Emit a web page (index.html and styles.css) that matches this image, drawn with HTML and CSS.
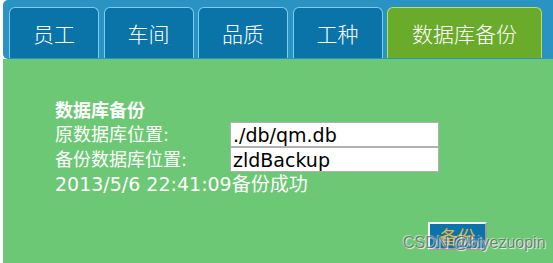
FILE: index.html
```html
<!DOCTYPE html>
<html lang="zh">
<head>
<meta charset="utf-8">
<title>数据库备份</title>
<link rel="stylesheet" href="styles.css">
</head>
<body>
<div class="header">
  <div class="tab">员工</div>
  <div class="tab">车间</div>
  <div class="tab">品质</div>
  <div class="tab">工种</div>
  <div class="tab tab-active">数据库备份</div>
</div>
<div class="panel">
  <div class="title">数据库备份</div>
  <div class="form">
    <span class="label">原数据库位置:</span>
    <input class="field" type="text" value="./db/qm.db">
    <span class="label">备份数据库位置:</span>
    <input class="field" type="text" value="zldBackup">
  </div>
  <div class="status">2013/5/6 22:41:09备份成功</div>
  <div class="actions"><button class="btn">备份</button></div>
  <div class="watermark">CSDN @biyezuopin</div>
</div>
</body>
</html>
```

FILE: styles.css
```css
html, body {
  margin: 0;
  padding: 0;
  height: 100%;
  background: #ffffff;
  overflow: hidden;
}
body {
  font-family: "DejaVu Sans", "Noto Sans CJK SC", sans-serif;
  display: flex;
  flex-direction: column;
}
.header {
  margin-left: 3px;
  height: 59px;
  flex: none;
  box-sizing: border-box;
  background: #2b93c4;
  border-radius: 5px 0 0 5px;
  display: flex;
  align-items: flex-end;
  gap: 4.5px;
  padding: 0 0 1px 6px;
}
.tab {
  box-sizing: border-box;
  width: 90px;
  height: 51px;
  border: 1px solid #7ccdf0;
  border-bottom: none;
  border-radius: 6px 6px 0 0;
  background: #0a74a9;
  color: #ffffff;
  font-family: "Noto Sans CJK SC", sans-serif;
  font-weight: 300;
  font-size: 21px;
  display: flex;
  align-items: center;
  justify-content: center;
}
.tab-active {
  width: 155px;
  background: #6aab2b;
  border-color: #b7e05e;
}
.panel {
  position: relative;
  flex: 1;
  margin-left: 3px;
  background: #6cc874;
  padding: 41px 0 0 52px;
  color: #ffffff;
  font-size: 18px;
}
.title {
  font-weight: bold;
  font-size: 18px;
  line-height: 22px;
  height: 22px;
}
.form {
  display: grid;
  grid-template-columns: 175px 209px;
  grid-auto-rows: 25px;
  align-items: center;
}
.label {
  line-height: 25px;
}
.field {
  box-sizing: border-box;
  width: 209px;
  height: 25px;
  margin: 0;
  border: 1px solid #b0b0b0;
  padding: 0 2px;
  font-family: "DejaVu Sans", sans-serif;
  font-size: 19px;
  color: #000000;
  background: #ffffff;
  outline: none;
}
.status {
  line-height: 25px;
  font-size: 19px;
}
.actions {
  margin-top: 25px;
  padding-left: 373px;
}
.btn {
  box-sizing: border-box;
  width: 59px;
  height: 28px;
  margin: 0;
  padding: 0;
  background: #0a74a9;
  border-style: solid;
  border-width: 2px;
  border-color: #f2f2f2 #9a9a9a #9a9a9a #f2f2f2;
  color: #e2b445;
  font-family: "Noto Sans CJK SC", sans-serif;
  font-size: 18px;
  line-height: 22px;
}
.watermark {
  position: absolute;
  left: 400px;
  top: 175px;
  font-family: "Liberation Sans", sans-serif;
  font-size: 16px;
  color: rgba(85, 85, 85, 0.7);
  text-shadow: 1px 1px 1px rgba(255, 255, 255, 0.85), -1px -1px 1px rgba(255, 255, 255, 0.5);
  white-space: nowrap;
}
```
